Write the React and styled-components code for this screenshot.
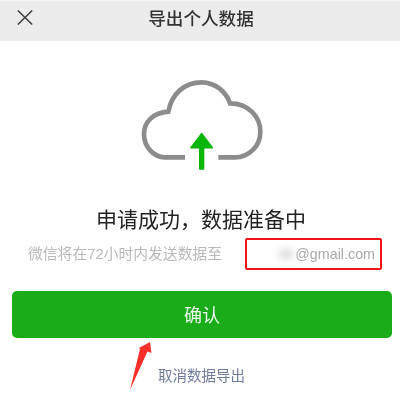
import React from "react";
import styled, { createGlobalStyle } from "styled-components";

const Global = createGlobalStyle`
  html, body { margin: 0; padding: 0; background: #fff; }
  body { font-family: "Liberation Sans", "Noto Sans CJK SC", sans-serif; }
`;

const Page = styled.div`
  position: relative;
  width: 400px;
  height: 404px;
  overflow: hidden;
  background: #fff;
  display: flex;
  flex-direction: column;
  filter: blur(0.45px);
`;

const Header = styled.header`
  height: 40px;
  flex: none;
  background: #ececec;
  border-top: 1px solid #f4f4f4;
  display: flex;
  align-items: center;
  justify-content: center;
  position: relative;
`;

const CloseButton = styled.svg`
  position: absolute;
  left: 17px;
  top: 9px;
  width: 16px;
  height: 15px;
`;

const Title = styled.h1`
  margin: -7px 0 0 2px;
  font: 500 17.6px/24px "Noto Sans CJK SC", sans-serif;
  color: #333;
`;

const Hero = styled.div`
  height: 130px;
  margin-top: 19px;
  flex: none;
  display: flex;
  justify-content: center;
`;

const Cloud = styled.svg`
  width: 160px;
  height: 130px;
`;

const Heading = styled.h2`
  margin: 12px 0 0 2px;
  font: 400 21px/32px "Noto Sans CJK SC", sans-serif;
  color: #222;
  text-align: center;
`;

const InfoRow = styled.div`
  margin-top: 4px;
  padding-left: 28px;
  height: 32px;
  display: flex;
  align-items: center;
`;

const InfoText = styled.span`
  width: 217px;
  flex: none;
  font: 400 14.8px/20px "Liberation Sans", "Noto Sans CJK SC", sans-serif;
  color: #b9b9b9;
  white-space: nowrap;
`;

const EmailBox = styled.div`
  width: 128px;
  height: 28px;
  border: 2px solid #f01414;
  border-radius: 2px;
  display: flex;
  align-items: center;
  justify-content: flex-end;
  padding-right: 5px;
  box-sizing: content-box;
  font: 400 14.3px/20px "Liberation Sans", sans-serif;
  color: #a9a9a9;
`;

const Smudge = styled.span`
  width: 16px;
  height: 12px;
  margin-right: 1px;
  background: #e4e4e4;
  border-radius: 6px;
  filter: blur(3px);
`;

const Confirm = styled.button`
  margin: 21px 8px 0 12px;
  height: 47px;
  flex: none;
  border: 0;
  border-radius: 5px;
  background: #1aad19;
  color: #eef8ee;
  padding-bottom: 3px;
  font: 400 18px/24px "Noto Sans CJK SC", sans-serif;
`;

const Cancel = styled.a`
  margin-top: 27px;
  padding-left: 3px;
  text-align: center;
  font: 400 14.5px/20px "Noto Sans CJK SC", sans-serif;
  color: #6f7c9b;
`;

const Pointer = styled.svg`
  position: absolute;
  left: 125px;
  top: 338px;
  width: 32px;
  height: 56px;
`;

export default function App() {
  return (
    <>
      <Global />
      <Page>
        <Header>
          <CloseButton viewBox="0 0 16 15">
            <path d="M0.8 0.5 L15.2 14.5 M15.2 0.5 L0.8 14.5" stroke="#444" strokeWidth="1.6" fill="none" />
          </CloseButton>
          <Title>导出个人数据</Title>
        </Header>
        <Hero>
          <Cloud viewBox="0 0 480 390">
            <path
              d="M195 292 H135 C100 292 72 260 72 222 C72 185 100 158 145 155 C155 100 195 67 245 67 C285 67 318 95 330 130 C385 130 421 170 421 215 C421 260 385 292 345 292 H295"
              fill="none"
              stroke="#8c8c8c"
              strokeWidth="14"
            />
            <path d="M245 221 L277 263 H213 Z" fill="#09b509" stroke="#09b509" strokeWidth="5" strokeLinejoin="round" />
            <rect x="237" y="255" width="16" height="74" rx="3" fill="#09b509" />
          </Cloud>
        </Hero>
        <Heading>申请成功，数据准备中</Heading>
        <InfoRow>
          <InfoText>微信将在72小时内发送数据至</InfoText>
          <EmailBox>
            <Smudge />
            @gmail.com
          </EmailBox>
        </InfoRow>
        <Confirm>确认</Confirm>
        <Cancel>取消数据导出</Cancel>
        <Pointer viewBox="0 0 32 56">
          <path d="M25 4 L26.5 15 L22.5 13.5 L5 52 L15 11 L14 10 Z" fill="#f9302a" />
        </Pointer>
      </Page>
    </>
  );
}
